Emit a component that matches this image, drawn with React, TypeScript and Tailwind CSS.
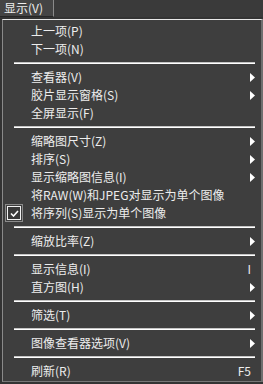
import React from "react";

type Row =
  | { t: "item"; label: string; arrow?: boolean; shortcut?: string; checked?: boolean }
  | { t: "sep" };

const rows: Row[] = [
  { t: "item", label: "上一项(P)" },
  { t: "item", label: "下一项(N)" },
  { t: "sep" },
  { t: "item", label: "查看器(V)", arrow: true },
  { t: "item", label: "胶片显示窗格(S)", arrow: true },
  { t: "item", label: "全屏显示(F)" },
  { t: "sep" },
  { t: "item", label: "缩略图尺寸(Z)", arrow: true },
  { t: "item", label: "排序(S)", arrow: true },
  { t: "item", label: "显示缩略图信息(I)", arrow: true },
  { t: "item", label: "将RAW(W)和JPEG对显示为单个图像" },
  { t: "item", label: "将序列(S)显示为单个图像", checked: true },
  { t: "sep" },
  { t: "item", label: "缩放比率(Z)", arrow: true },
  { t: "sep" },
  { t: "item", label: "显示信息(I)", shortcut: "I" },
  { t: "item", label: "直方图(H)", arrow: true },
  { t: "sep" },
  { t: "item", label: "筛选(T)", arrow: true },
  { t: "sep" },
  { t: "item", label: "图像查看器选项(V)", arrow: true },
  { t: "sep" },
  { t: "item", label: "刷新(R)", shortcut: "F5" },
];

function Arrow() {
  return (
    <svg width="5" height="9" viewBox="0 0 5 9" className="block">
      <polygon points="0,0 5,4.5 0,9" fill="#ffffff" />
    </svg>
  );
}

function Check() {
  return (
    <div className="w-[18px] h-[18px] border border-[#8a8a8a] p-px">
      <div className="w-full h-full border border-[#f2f2f2] bg-[#3a3a3a] flex items-center justify-center">
        <svg width="9" height="7" viewBox="0 0 9 7">
          <polyline points="1,3.5 3.5,6 8,1" fill="none" stroke="#ffffff" strokeWidth="1.6" />
        </svg>
      </div>
    </div>
  );
}

export default function App() {
  return (
    <div
      className="w-[263px] h-[384px] bg-[#333333] overflow-hidden text-[12px] text-[#ededed]"
      style={{ fontFamily: '"Noto Sans CJK SC", "Noto Sans", sans-serif' }}
    >
      <div className="h-[17px] bg-[#3a3a3a] flex">
        <div className="w-[54px] h-[17px] bg-[#444444] border-r border-[#8a8a8a] border-b border-b-[#262626] flex items-center pl-[4px] leading-none">
          显示(V)
        </div>
      </div>
      <div className="h-[2px]" />
      <div className="ml-[2px] w-[261px] h-[363px] border-t border-l border-t-[#e8e8e8] border-l-[#8a8a8a] border-r-2 border-r-[#6e6e6e] border-b border-b-[#777777] bg-[#3e3e3e] pt-[2px]">
        {rows.map((r, i) =>
          r.t === "sep" ? (
            <div key={i} className="h-[10px] flex items-center pl-[11px] pr-[6px]">
              <div className="w-full">
                <div className="h-px bg-[#c4c4c4]" />
                <div className="h-px bg-[#ffffff]" />
              </div>
            </div>
          ) : (
            <div key={i} className="h-[18px] flex items-center relative">
              {r.checked && (
                <div className="absolute left-[2px] top-0">
                  <Check />
                </div>
              )}
              <div className="pl-[28px] flex-1 whitespace-nowrap leading-none">{r.label}</div>
              {r.shortcut && (
                <div className="absolute right-[10px] leading-none">{r.shortcut}</div>
              )}
              {r.arrow && (
                <div className="absolute right-[6px]">
                  <Arrow />
                </div>
              )}
            </div>
          )
        )}
      </div>
    </div>
  );
}
